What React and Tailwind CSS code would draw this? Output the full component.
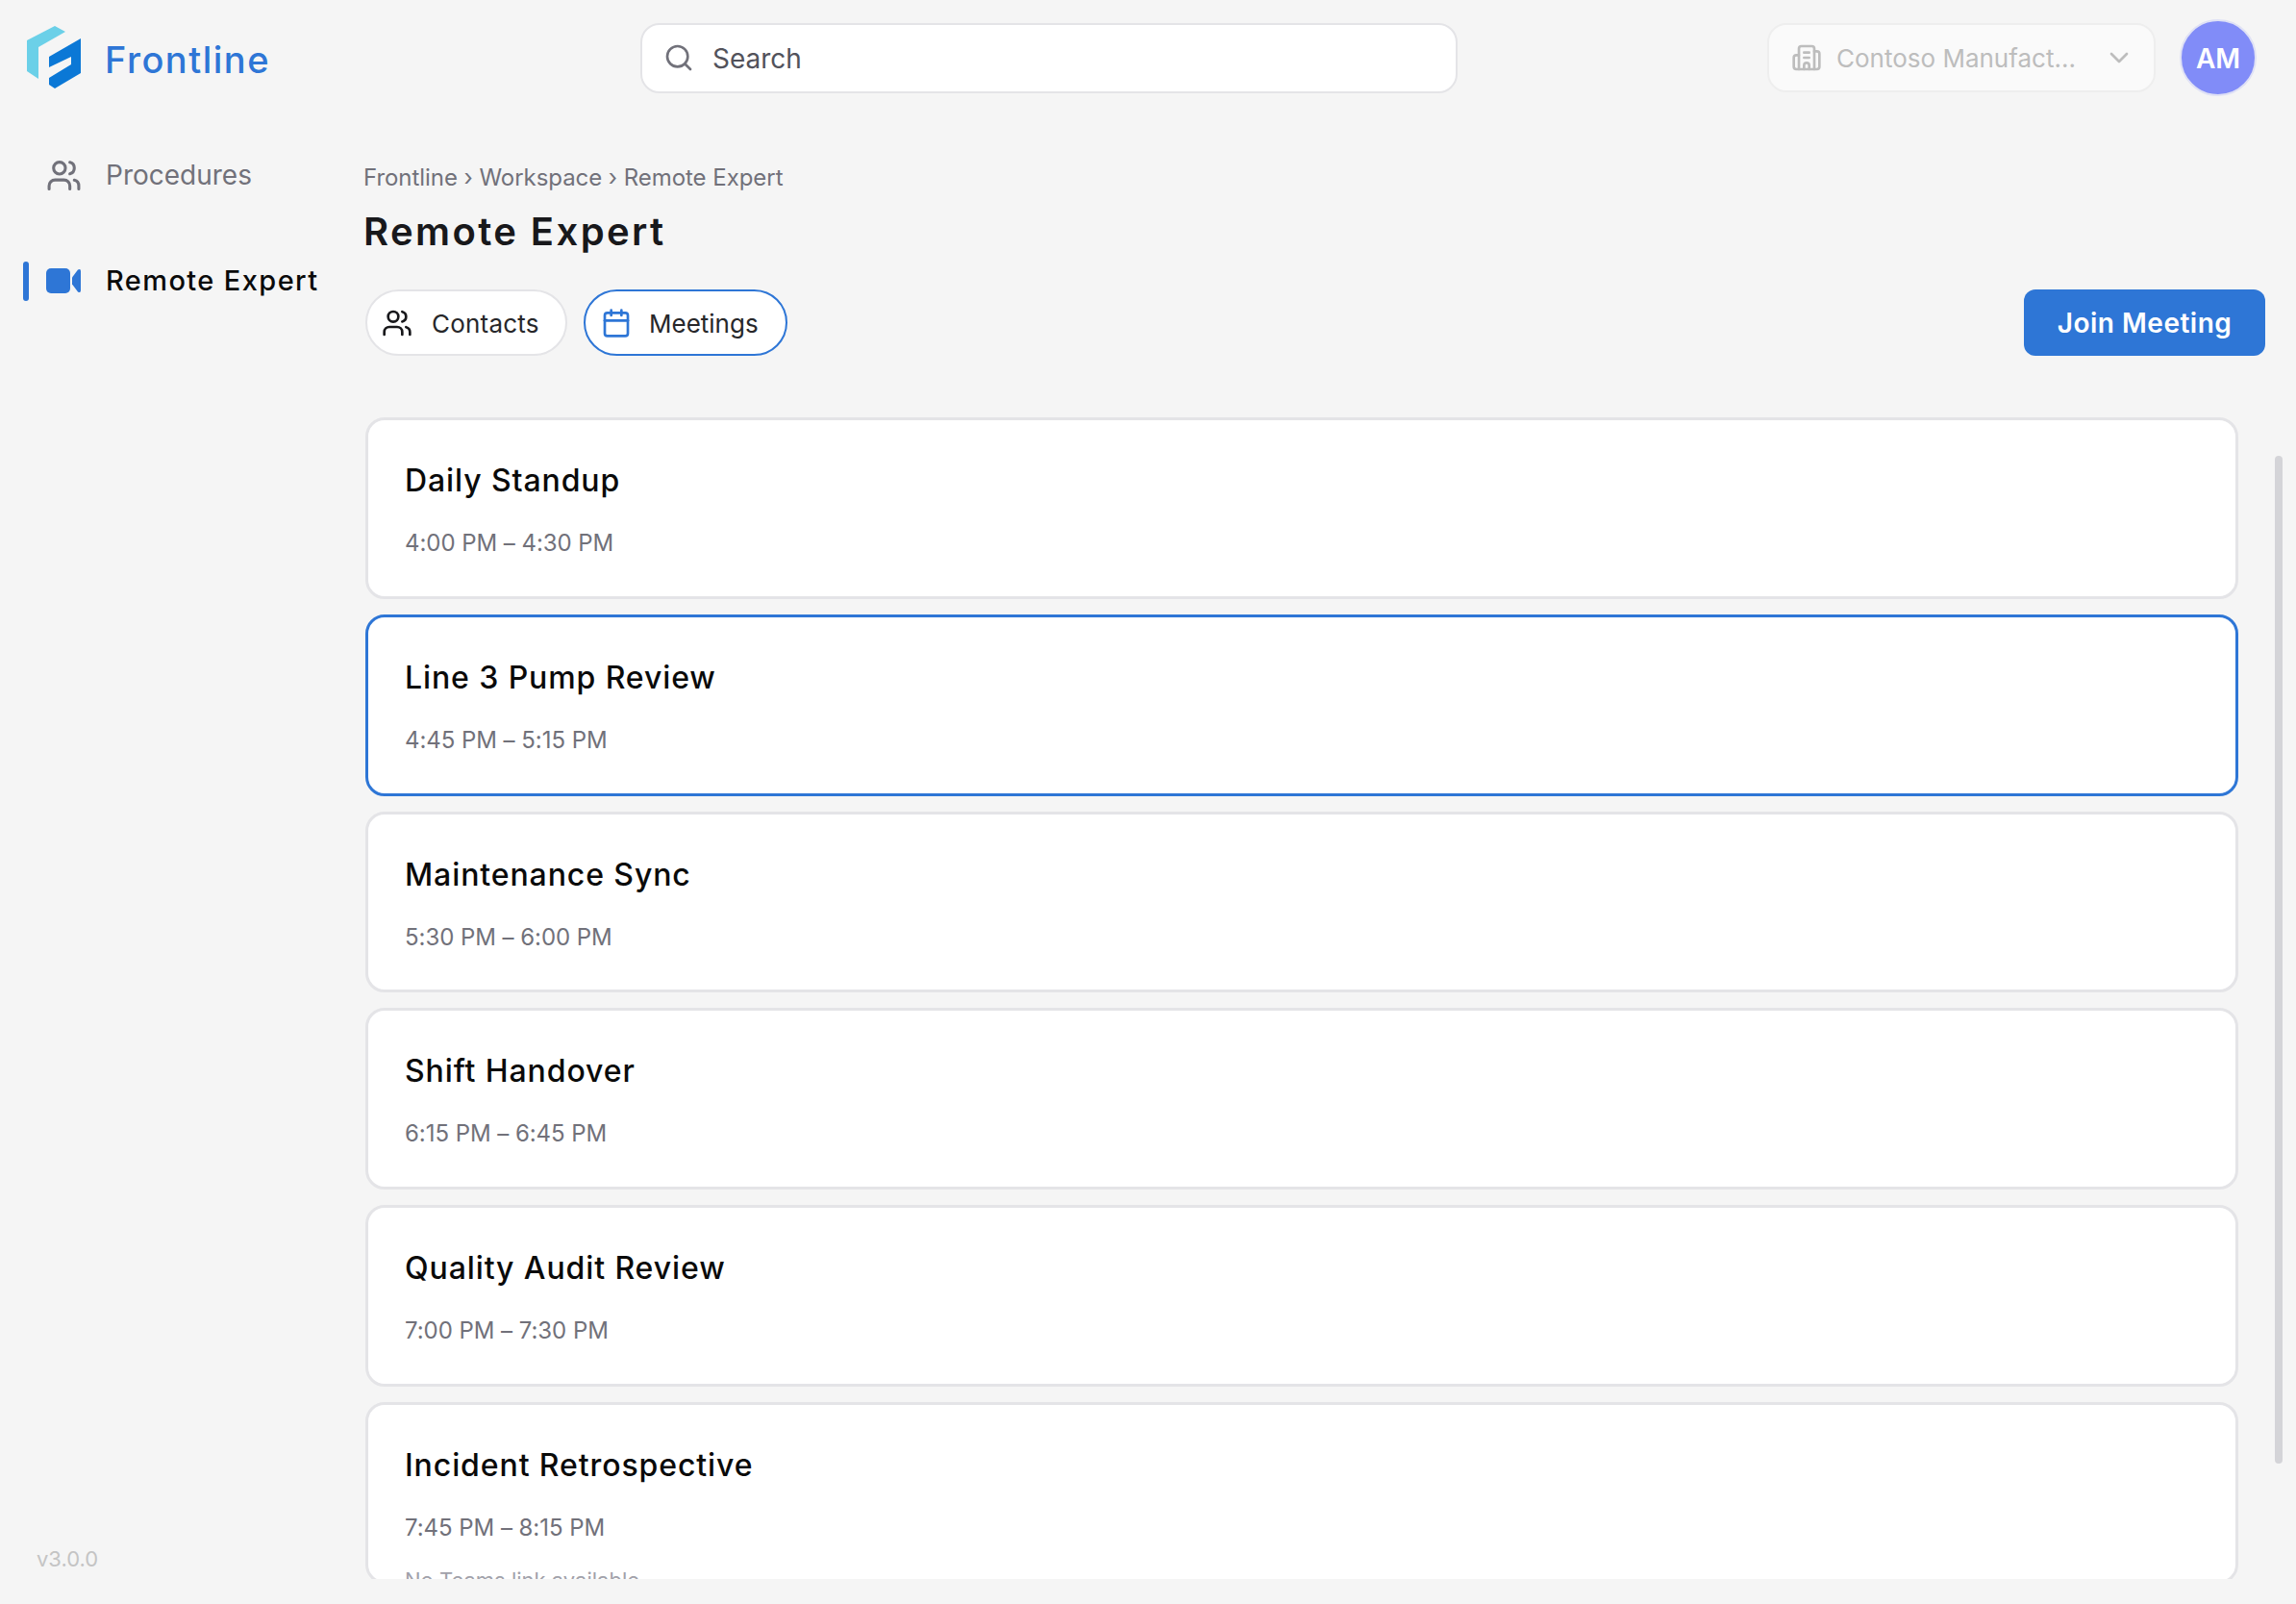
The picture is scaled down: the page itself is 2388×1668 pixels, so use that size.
import React from 'react';
import { Users, Calendar, Search, ChevronDown, Building2 } from 'lucide-react';

const meetings = [
  { title: 'Daily Standup', time: '4:00 PM – 4:30 PM' },
  { title: 'Line 3 Pump Review', time: '4:45 PM – 5:15 PM', selected: true },
  { title: 'Maintenance Sync', time: '5:30 PM – 6:00 PM' },
  { title: 'Shift Handover', time: '6:15 PM – 6:45 PM' },
  { title: 'Quality Audit Review', time: '7:00 PM – 7:30 PM' },
  { title: 'Incident Retrospective', time: '7:45 PM – 8:15 PM', note: 'No Teams link available' },
];

const Logo = () => (
  <svg width="58" height="66" viewBox="28 28 58 66" className="shrink-0">
    <path d="M28 43 L57 28 L68 34 L40 50 L40 83 L28 75 Z" fill="#6bd0e8" />
    <path d="M84 41 L84 77 L57 93 L51 89 L51 82 L74 68 L74 60 L51 71 L51 60 Z" fill="#0b78d6" />
  </svg>
);

const VideoIcon = () => (
  <svg width="36" height="26" viewBox="0 0 36 26" className="shrink-0 text-[#2e76d6]" fill="currentColor">
    <rect x="0" y="0" width="25" height="26" rx="5" />
    <path d="M27 9.5 L33 1.5 Q36 0 36 3 L36 23 Q36 26 33 24.5 L27 16.5 Z" />
  </svg>
);

const MeetingCard = ({ title, time, note, selected }) => (
  <div
    className={`shrink-0 h-[188.8px] rounded-[20px] bg-white pl-[38px] pt-[41px] border-[3px] ${
      selected ? 'border-[#2e76d6]' : 'border-[#e4e4e7]'
    }`}
  >
    <div className="text-[32px] leading-[44px] font-medium tracking-[0.9px] text-[#0a0a0a]">{title}</div>
    <div className="mt-[21px] text-[24px] leading-[44px] tracking-[-0.05px] text-[#71717a]">{time}</div>
    {note && <div className="mt-[17px] text-[22px] leading-[30px] text-[#a1a1aa]">{note}</div>}
  </div>
);

export default function App() {
  return (
    <div className="h-screen overflow-hidden bg-[#f5f5f5] font-['Inter',sans-serif] [font-optical-sizing:none] flex flex-col">
      <header className="h-[120px] shrink-0 flex items-center pl-[28px] pr-[41px]">
        <div className="w-[638px] flex items-center gap-[23px]">
          <Logo />
          <span className="pt-[4px] text-[38px] font-medium tracking-[1.5px] text-[#2e76d6]">Frontline</span>
        </div>
        <div className="w-[850px] h-[73px] flex items-center rounded-[20px] border-2 border-[#e4e4e7] bg-white pl-[22px]">
          <Search size={32} strokeWidth={2} className="text-[#71717a]" />
          <span className="ml-[19px] pt-[1px] text-[28px] text-[#52525b]">Search</span>
        </div>
        <div className="ml-[322px] w-[404px] h-[72px] flex items-center rounded-[20px] border-2 border-[#eeeeee] bg-[#fafafa] pl-[23px] pr-[20px] text-[#bdbdbd]">
          <Building2 size={32} strokeWidth={2} className="shrink-0" />
          <span className="ml-[15px] pt-[1px] flex-1 text-[26px]">Contoso Manufact...</span>
          <ChevronDown size={32} strokeWidth={2} className="shrink-0" />
        </div>
        <div className="ml-[25px] size-[80px] rounded-full border-2 border-[#dfe1f5] bg-[#818cf8] flex items-center justify-center pt-[2px] text-[28px] font-semibold text-white">
          AM
        </div>
      </header>

      <div className="flex-1 min-h-0 flex">
        <aside className="w-[378px] shrink-0 flex flex-col pb-[30px]">
          <div className="mt-[42px] h-[40px] flex items-center pl-[48px] text-[#71717a]">
            <Users size={37} strokeWidth={2} />
            <span className="ml-[25px] text-[28px]">Procedures</span>
          </div>
          <div className="mt-[69px] h-[42px] flex items-center pl-[24px]">
            <div className="w-[6px] h-[41px] rounded-sm bg-[#2e76d6]" />
            <div className="ml-[18px]">
              <VideoIcon />
            </div>
            <span className="ml-[26px] text-[29px] font-medium tracking-[1.4px] text-[#0a0a0a]">Remote Expert</span>
          </div>
          <div className="mt-auto pl-[38px] text-[22px] text-[#c4c4c4]">v3.0.0</div>
        </aside>

        <main className="flex-1 min-w-0 flex flex-col">
          <div className="mt-[48px] text-[24px] leading-[34px] tracking-[-0.05px] text-[#71717a]">Frontline › Workspace › Remote Expert</div>
          <h1 className="mt-[14px] text-[40px] leading-[50px] font-semibold tracking-[2.4px] text-[#18181b]">Remote Expert</h1>
          <div className="mt-[35px] flex items-start pl-[2px] pr-[32px]">
            <div className="h-[69px] w-[210px] flex items-center rounded-full border-2 border-[#e4e4e7] bg-white pl-[15px]">
              <Users size={32} strokeWidth={2} className="text-[#18181b]" />
              <span className="ml-[20px] pt-[2px] text-[26px] tracking-[0.2px] text-[#27272a]">Contacts</span>
            </div>
            <div className="ml-[17px] h-[69px] w-[212px] flex items-center rounded-full border-2 border-[#2e76d6] bg-white pl-[16px]">
              <Calendar size={32} strokeWidth={2} className="text-[#2e76d6]" />
              <span className="ml-[18px] pt-[2px] text-[26px] text-[#27272a]">Meetings</span>
            </div>
            <button className="ml-auto h-[69px] w-[251px] rounded-[12px] bg-[#2e76d6] text-[28px] font-semibold tracking-[0.5px] text-white">
              Join Meeting
            </button>
          </div>
          <div className="relative mt-[64px] h-[1208px] pl-[2px] pr-[60px]">
            <div className="h-full overflow-hidden flex flex-col gap-[16px]">
              {meetings.map((m) => (
                <MeetingCard key={m.title} {...m} />
              ))}
            </div>
            <div className="absolute right-[14px] top-[40px] w-[8px] h-[1048px] rounded-full bg-[#d4d4d8]" />
          </div>
        </main>
      </div>
    </div>
  );
}
